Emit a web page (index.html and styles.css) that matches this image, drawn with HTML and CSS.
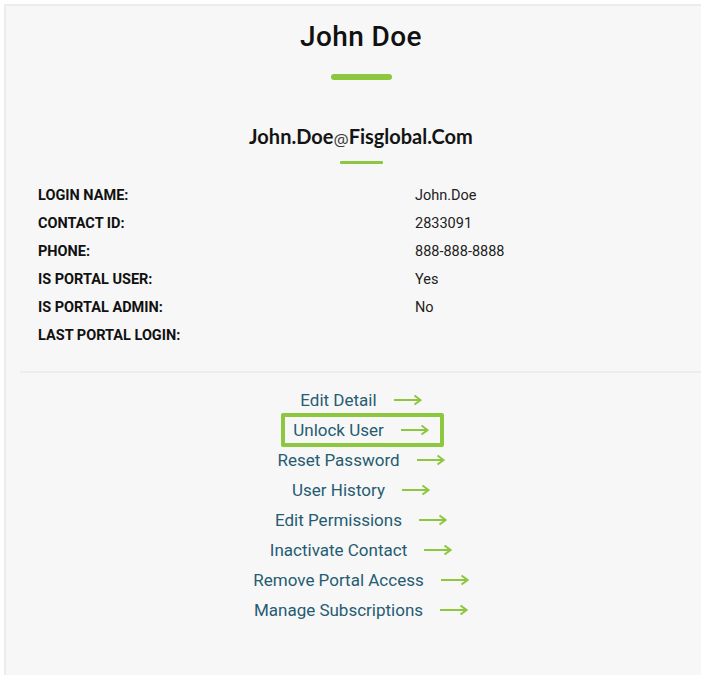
FILE: index.html
```html
<!DOCTYPE html>
<html lang="en">
<head>
<meta charset="utf-8">
<title>John Doe</title>
<link rel="stylesheet" href="styles.css">
</head>
<body>
<main class="panel">
  <header class="profile-head">
    <h1 class="name">John Doe</h1>
    <span class="bar bar-lg"></span>
    <h2 class="email">John.Doe<span class="at">@</span>Fisglobal.Com</h2>
    <span class="bar bar-sm"></span>
  </header>

  <dl class="details">
    <dt>LOGIN NAME:</dt><dd>John.Doe</dd>
    <dt>CONTACT ID:</dt><dd>2833091</dd>
    <dt>PHONE:</dt><dd>888-888-8888</dd>
    <dt>IS PORTAL USER:</dt><dd>Yes</dd>
    <dt>IS PORTAL ADMIN:</dt><dd>No</dd>
    <dt>LAST PORTAL LOGIN:</dt><dd></dd>
  </dl>

  <hr class="divider">

  <nav class="actions">
    <a class="action" href="#">Edit Detail<svg class="arrow" viewBox="0 0 28 12"><path d="M0 6H26M20.5 1.5L26.5 6L20.5 10.5"/></svg></a>
    <a class="action active" href="#">Unlock User<svg class="arrow" viewBox="0 0 28 12"><path d="M0 6H26M20.5 1.5L26.5 6L20.5 10.5"/></svg></a>
    <a class="action" href="#">Reset Password<svg class="arrow" viewBox="0 0 28 12"><path d="M0 6H26M20.5 1.5L26.5 6L20.5 10.5"/></svg></a>
    <a class="action" href="#">User History<svg class="arrow" viewBox="0 0 28 12"><path d="M0 6H26M20.5 1.5L26.5 6L20.5 10.5"/></svg></a>
    <a class="action" href="#">Edit Permissions<svg class="arrow" viewBox="0 0 28 12"><path d="M0 6H26M20.5 1.5L26.5 6L20.5 10.5"/></svg></a>
    <a class="action" href="#">Inactivate Contact<svg class="arrow" viewBox="0 0 28 12"><path d="M0 6H26M20.5 1.5L26.5 6L20.5 10.5"/></svg></a>
    <a class="action" href="#">Remove Portal Access<svg class="arrow" viewBox="0 0 28 12"><path d="M0 6H26M20.5 1.5L26.5 6L20.5 10.5"/></svg></a>
    <a class="action" href="#">Manage Subscriptions<svg class="arrow" viewBox="0 0 28 12"><path d="M0 6H26M20.5 1.5L26.5 6L20.5 10.5"/></svg></a>
  </nav>
</main>
</body>
</html>
```

FILE: styles.css
```css
html, body {
  margin: 0;
  padding: 0;
  background: #ffffff;
  overflow: hidden;
}

body {
  font-family: Roboto, "Liberation Sans", sans-serif;
  color: #1a1a1a;
}

.panel {
  box-sizing: border-box;
  margin: 4px 0 0 4px;
  width: 712px;
  height: 680px;
  background: #f7f7f7;
  border-top: 2px solid #ececec;
  border-left: 2px solid #ececec;
  display: flex;
  flex-direction: column;
}

.profile-head {
  display: flex;
  flex-direction: column;
  align-items: center;
}

.name {
  margin: 15px 0 0;
  font-size: 28px;
  font-weight: 500;
  line-height: 32px;
  color: #111;
  letter-spacing: 0.4px;
}

.bar {
  display: block;
  background: #8dc63f;
  border-radius: 3px;
}

.bar-lg {
  width: 61px;
  height: 6px;
  margin-top: 21px;
}

.bar-sm {
  width: 43px;
  height: 3px;
  margin-top: 11px;
  border-radius: 1px;
}

.email {
  margin: 44px 0 0;
  font-family: Lato, "Open Sans", sans-serif;
  font-size: 20px;
  font-weight: 700;
  line-height: 24px;
  color: #141414;
}

.email .at {
  font-family: "Open Sans", sans-serif;
  font-size: 17px;
  font-weight: 500;
  color: #3a3a3a;
  position: relative;
  top: 2px;
}

.details {
  display: grid;
  grid-template-columns: 377px 1fr;
  grid-auto-rows: 28px;
  align-items: center;
  margin: 17px 0 0 32px;
  font-size: 14.5px;
}

.details dt {
  font-weight: 700;
  color: #111;
}

.details dd {
  margin: 0;
  color: #222;
}

.divider {
  margin: 22px 0 0 14px;
  border: 0;
  height: 2px;
  background: #ededed;
}

.actions {
  display: flex;
  flex-direction: column;
  align-items: center;
  margin-top: 12px;
}

.action {
  display: flex;
  align-items: center;
  height: 30px;
  font-size: 17px;
  color: #255c72;
  text-decoration: none;
}

.action.active {
  box-sizing: border-box;
  height: 34px;
  margin: -2px 0 -2px 3px;
  padding: 0 11px 0 8px;
  border: 4px solid #8dc63f;
  border-radius: 2px;
}

.arrow {
  width: 28px;
  height: 12px;
  margin-left: 17px;
  fill: none;
  stroke: #8dc63f;
  stroke-width: 2;
}
```
